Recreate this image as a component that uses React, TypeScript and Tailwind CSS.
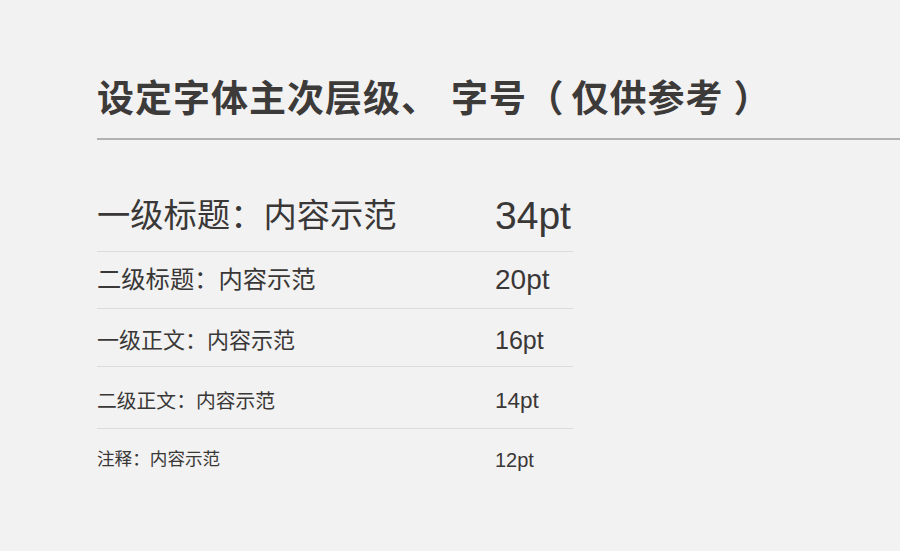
const rows = [
  { label: "一级标题：内容示范", size: "34pt", h: "h-[72px]", label_cls: "text-[33.3px]", num_cls: "text-[39px]" },
  { label: "二级标题：内容示范", size: "20pt", h: "h-[57px]", label_cls: "text-[24.3px]", num_cls: "text-[28px]" },
  { label: "一级正文：内容示范", size: "16pt", h: "h-[58px] pt-[6px]", label_cls: "text-[22px]", num_cls: "text-[25px]" },
  { label: "二级正文：内容示范", size: "14pt", h: "h-[62px] pt-[8px]", label_cls: "text-[19.8px]", num_cls: "text-[22.5px]" },
  { label: "注释：内容示范", size: "12pt", h: "h-[62px]", label_cls: "text-[17.6px]", num_cls: "text-[20px]" },
];

export default function App() {
  return (
    <div className="h-[551px] w-[900px] overflow-hidden bg-[#f2f2f2] pl-[97px] text-[#3a3737] [font-family:'Liberation_Sans','Noto_Sans_CJK_SC',sans-serif]">
      <div className="border-b-2 border-[#b2b2b2] pb-[17px] pt-[78px]">
        <h1 className="flex text-[37px] font-semibold leading-[43px] tracking-[1px] text-[#3d3a3a]">
          <span>设定字体主次层级、</span>
          <span className="ml-[12px]">字号</span>
          <span className="ml-[18px] [font-feature-settings:'halt']">（</span>
          <span className="ml-[7px]">仅供参考</span>
          <span className="ml-[10px]">）</span>
        </h1>
      </div>

      <ul className="mt-[40px] w-[476px]">
        {rows.map((r, i) => (
          <li
            key={r.size}
            className={`flex items-center ${r.h} ${i < rows.length - 1 ? "border-b border-[#dcdcdc]" : ""}`}
          >
            <span className={`w-[398px] shrink-0 ${r.label_cls} leading-none`}>{r.label}</span>
            <span className={`${r.num_cls} leading-none`}>{r.size}</span>
          </li>
        ))}
      </ul>
    </div>
  );
}
